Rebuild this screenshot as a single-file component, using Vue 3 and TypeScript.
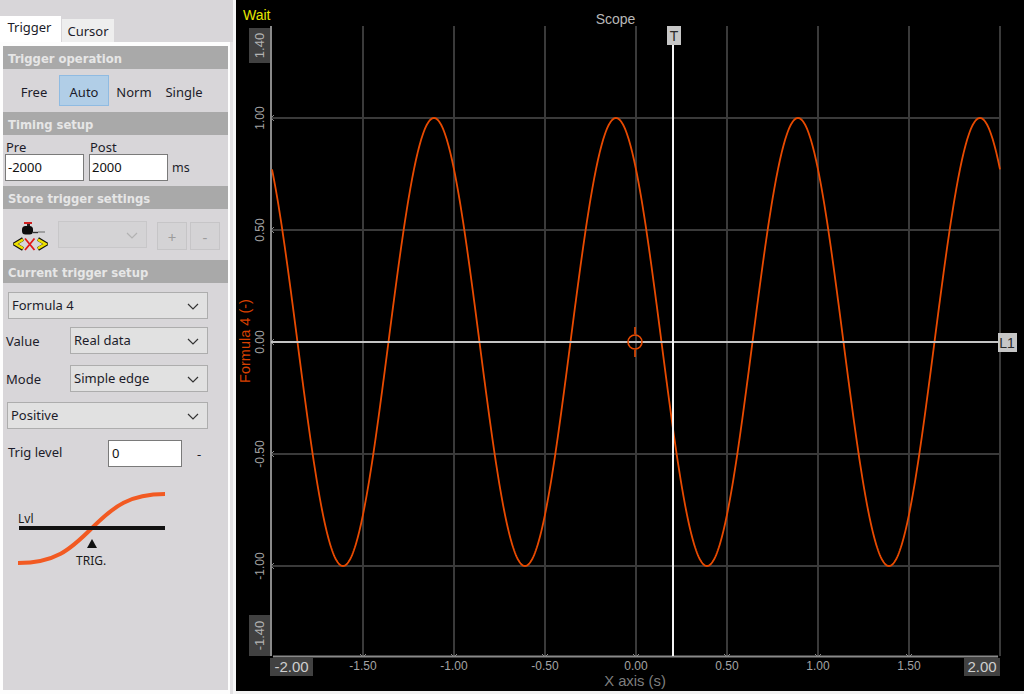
<script setup lang="ts">
const xPx = (v: number) => 636 + v * 182
const yPx = (v: number) => 342 - v * 224

const trace = Array.from({ length: 801 }, (_, i) => {
  const t = -2 + i * 0.005
  return `${xPx(t).toFixed(2)},${yPx(Math.cos(2 * Math.PI * (t + 0.11))).toFixed(2)}`
}).join(' ')

const gridX = [-1.5, -1, -0.5, 0, 0.5, 1, 1.5, 2].map(xPx)
const gridY = [1, 0.5, 0, -0.5, -1].map(yPx)

const xTicks = [
  { label: '-1.50', v: -1.5 },
  { label: '-1.00', v: -1 },
  { label: '-0.50', v: -0.5 },
  { label: '0.00', v: 0 },
  { label: '0.50', v: 0.5 },
  { label: '1.00', v: 1 },
  { label: '1.50', v: 1.5 },
]
const yTicks = [
  { label: '1.00', v: 1 },
  { label: '0.50', v: 0.5 },
  { label: '0.00', v: 0 },
  { label: '-0.50', v: -0.5 },
  { label: '-1.00', v: -1 },
]
const modes = ['Free', 'Auto', 'Norm', 'Single']
</script>

<template>
  <div class="app">
    <aside class="side">
      <div class="tabs">
        <div class="tab active">Trigger</div>
        <div class="tab">Cursor</div>
      </div>
      <div class="sheet">
        <div class="panel">
          <div class="head">Trigger operation</div>
          <div class="modes">
            <div v-for="m in modes" :key="m" class="mode" :class="{ on: m === 'Auto' }">{{ m }}</div>
          </div>

          <div class="head">Timing setup</div>
          <div class="timing">
            <div class="field">
              <span class="cap">Pre</span>
              <div class="input wide">-2000</div>
            </div>
            <div class="field">
              <span class="cap">Post</span>
              <div class="input wide">2000</div>
            </div>
            <span class="unit">ms</span>
          </div>

          <div class="head">Store trigger settings</div>
          <div class="store">
            <svg class="valve" viewBox="0 0 35 30" width="35" height="30">
              <rect x="11" y="1" width="8" height="2" fill="#d02020" />
              <rect x="14" y="3" width="3" height="3" fill="#222" />
              <rect x="9" y="5" width="11" height="8.5" rx="3.5" fill="#0c0c0c" />
              <path d="M20 11.5h5" stroke="#333" stroke-width="1.4" fill="none" />
              <path d="M25 11h7" stroke="#888" stroke-width="1.4" fill="none" />
              <path d="M10 18 1.5 23l8.500 5" fill="none" stroke="#111" stroke-width="3.800" />
              <path d="M10 18.600 2.500 23l7.500 4.400" fill="none" stroke="#eee000" stroke-width="2.600" />
              <path d="M25 18l8.500 5-8.500 5" fill="none" stroke="#111" stroke-width="3.800" />
              <path d="M25 18.600l7.500 4.400-7.500 4.400" fill="none" stroke="#eee000" stroke-width="2.600" />
              <path d="M12 17.500l9.500 11.500M21.500 17.500 12 29" stroke="#e01818" stroke-width="1.800" />
            </svg>
            <div class="select off">
              <svg class="chev" viewBox="0 0 12 7" width="12" height="7"><path d="M1 1l5 5 5-5" fill="none" stroke="#b2b2b2" stroke-width="1.2" /></svg>
            </div>
            <div class="btn plus">+</div>
            <div class="btn">-</div>
          </div>

          <div class="head">Current trigger setup</div>
          <div class="setup">
            <div class="select first">
              <span class="sv">Formula 4</span>
              <svg class="chev" viewBox="0 0 12 7" width="12" height="7"><path d="M1 1l5 5 5-5" fill="none" stroke="#333" stroke-width="1.2" /></svg>
            </div>
            <div class="row r-value">
              <span class="lab">Value</span>
              <div class="select part">
                <span class="sv">Real data</span>
                <svg class="chev" viewBox="0 0 12 7" width="12" height="7"><path d="M1 1l5 5 5-5" fill="none" stroke="#333" stroke-width="1.2" /></svg>
              </div>
            </div>
            <div class="row r-mode">
              <span class="lab">Mode</span>
              <div class="select part">
                <span class="sv">Simple edge</span>
                <svg class="chev" viewBox="0 0 12 7" width="12" height="7"><path d="M1 1l5 5 5-5" fill="none" stroke="#333" stroke-width="1.2" /></svg>
              </div>
            </div>
            <div class="select pos">
              <span class="sv">Positive</span>
              <svg class="chev" viewBox="0 0 12 7" width="12" height="7"><path d="M1 1l5 5 5-5" fill="none" stroke="#333" stroke-width="1.2" /></svg>
            </div>
            <div class="row r-trig">
              <span class="lab trig">Trig level</span>
              <div class="input level">0</div>
              <span class="dash">-</span>
            </div>
            <svg class="diagram" viewBox="0 0 170 90" width="170" height="90">
              <path d="M18 80C55 80 70 67 92 45S130 11 165 11" fill="none" stroke="#f25a22" stroke-width="4" />
              <rect x="19" y="43" width="146" height="4" fill="#111" />
              <path d="M92 56l5 9H87z" fill="#111" />
              <text x="18" y="40" class="dtext">Lvl</text>
              <text x="76" y="82" class="dtext">TRIG.</text>
            </svg>
          </div>
        </div>
      </div>
    </aside>

    <main class="main">
      <svg class="plot" viewBox="236 0 788 691" width="788" height="691">
        <rect x="236" y="0" width="788" height="691" fill="#000" />
        <g stroke="#3a3a3a" stroke-width="2">
          <line v-for="x in gridX" :key="x" :x1="x" :x2="x" y1="26" y2="656" />
          <line v-for="y in gridY" :key="y" x1="271" x2="1000" :y1="y" :y2="y" />
        </g>
        <line x1="271" x2="271" y1="26" y2="656" stroke="#8a8a8a" stroke-width="2" />
        <line x1="273" x2="998" y1="656.5" y2="656.5" stroke="#8a8a8a" stroke-width="2" />
        <g fill="none" stroke="#8a8a8a" stroke-width="1">
          <path v-for="y in gridY" :key="'m' + y" :d="`M274 ${y - 3}l-3 3 3 3`" />
          <path v-for="t in xTicks" :key="'n' + t.v" :d="`M${xPx(t.v) - 3} 654l3 3 3-3`" />
        </g>

        <polyline :points="trace" fill="none" stroke="#e84a00" stroke-width="1.8" />

        <line x1="271" x2="998" y1="342" y2="342" stroke="#c4c4c4" stroke-width="2" />
        <line x1="673" x2="673" y1="44" y2="656" stroke="#f4f4f4" stroke-width="2" />

        <g fill="none" stroke="#e84a00" stroke-width="1.6">
          <circle cx="635" cy="342" r="7" />
          <line x1="635" x2="635" y1="327" y2="334" />
          <line x1="635" x2="635" y1="350" y2="357" />
        </g>

        <rect x="667" y="26" width="14" height="19" fill="#c6c6c6" />
        <text x="674" y="41" text-anchor="middle" class="tick dark">T</text>
        <rect x="998" y="333" width="19" height="19" fill="#c6c6c6" />
        <text x="1007" y="348" text-anchor="middle" class="tick dark">L1</text>

        <text x="243" y="20" class="wait">Wait</text>
        <text x="615.5" y="24" text-anchor="middle" class="title">Scope</text>
        <text x="635" y="686" text-anchor="middle" class="xname">X axis (s)</text>

        <rect x="249" y="28" width="21" height="35" fill="#414141" />
        <rect x="249" y="615" width="21" height="41" fill="#414141" />
        <text transform="translate(250 341) rotate(-90)" text-anchor="middle" class="yname">Formula 4 (-)</text>
        <text transform="translate(264 45.5) rotate(-90)" text-anchor="middle" class="tick">1.40</text>
        <text transform="translate(264 635.5) rotate(-90)" text-anchor="middle" class="tick">-1.40</text>
        <text
          v-for="t in yTicks"
          :key="t.label"
          :transform="`translate(264 ${yPx(t.v)}) rotate(-90)`"
          text-anchor="middle"
          class="tick small"
        >{{ t.label }}</text>

        <rect x="270" y="658" width="43" height="18" fill="#414141" />
        <rect x="964" y="658" width="36" height="18" fill="#414141" />
        <text x="291.5" y="672" text-anchor="middle" class="tick big">-2.00</text>
        <text x="982" y="672" text-anchor="middle" class="tick big">2.00</text>
        <text
          v-for="t in xTicks"
          :key="t.label"
          :x="xPx(t.v)"
          y="670"
          text-anchor="middle"
          class="tick small"
        >{{ t.label }}</text>
      </svg>
      <div class="strip"></div>
    </main>
  </div>
</template>

<style>
html, body { margin: 0; background: #d8d6d9; }
</style>

<style scoped>
.app {
  width: 1024px;
  height: 694px;
  display: flex;
  overflow: hidden;
  background: #d8d6d9;
  font-family: "Noto Sans", "Liberation Sans", sans-serif;
  font-size: 13px;
  color: #1c1c2a;
}
.side {
  width: 236px;
  flex: none;
  box-sizing: border-box;
  border-right: 3px solid #f6f6f6;
  display: flex;
  flex-direction: column;
}
.tabs {
  display: flex;
  align-items: flex-end;
  height: 42px;
  flex: none;
}
.tab {
  width: 52px;
  height: 23px;
  margin-left: 1px;
  line-height: 25px;
  text-align: center;
  background: #eeeeee;
}
.tab.active {
  width: 61px;
  height: 26px;
  margin: 0;
  padding-right: 2px;
  box-sizing: border-box;
  line-height: 22px;
  background: #fff;
}
.sheet {
  flex: 1;
  display: flex;
  background: #e3e2e4;
}
.panel {
  width: 225px;
  border: solid #fdfdfd;
  border-width: 4px 2px 4px 3px;
  background: #d8d6d9;
}
.head {
  height: 23px;
  line-height: 26px;
  padding-left: 5px;
  background: #a9a9a9;
  color: #e6e6e6;
  font-family: "DejaVu Sans", sans-serif;
  font-size: 11.6px;
  font-weight: 700;
}
.modes {
  height: 43px;
  display: flex;
  align-items: center;
  padding-left: 6px;
  box-sizing: border-box;
}
.mode {
  width: 50px;
  height: 31px;
  line-height: 34px;
  text-align: center;
  box-sizing: border-box;
}
.mode.on {
  background: #b1cee7;
  box-shadow: inset 0 0 0 1px #8fbbe2;
}
.timing {
  height: 51px;
  display: flex;
  align-items: flex-end;
  padding: 0 0 5px 2px;
  box-sizing: border-box;
  gap: 5px;
}
.field { display: flex; flex-direction: column; }
.cap { line-height: 12px; height: 13px; padding-left: 1px; }
.input {
  background: #fff;
  border: 1px solid #7a7a7a;
  box-sizing: border-box;
  height: 27px;
  line-height: 24px;
  padding-left: 2px;
  color: #111;
}
.input.wide { width: 79px; }
.unit { line-height: 26px; margin-left: -1px; font-size: 12.5px; }
.store {
  height: 51px;
  display: flex;
  align-items: center;
  padding-left: 10px;
}
.valve { flex: none; margin-right: 10px; margin-top: 2px; }
.select {
  position: relative;
  box-sizing: border-box;
  background: #e1e1e1;
  border: 1px solid #adadad;
  height: 27px;
  line-height: 24px;
}
.select.off {
  width: 89px;
  background: #d4d3d5;
  border-color: #c8c7c9;
  margin-right: 10px;
}
.chev { position: absolute; right: 8px; top: 10px; }
.sv { padding-left: 3px; }
.btn {
  width: 30px;
  height: 28px;
  line-height: 28px;
  box-sizing: border-box;
  border: 1px solid #c6c5c7;
  background: #d4d3d5;
  text-align: center;
  color: #9c9c9c;
  font-size: 15px;
  margin-right: 3px;
  margin-top: 2px;
}
.setup { display: flex; flex-direction: column; }
.first { margin: 9px 20px 0 5px; width: 200px; }
.row { display: flex; align-items: center; }
.r-value { margin-top: 8px; }
.r-mode { margin-top: 11px; }
.lab {
  width: 64px;
  height: 27px;
  padding-left: 3px;
  box-sizing: border-box;
  margin-right: 3px;
  line-height: 29px;
}
.part { width: 138px; }
.pos { margin: 10px 20px 0 4px; width: 201px; }
.r-trig { margin-top: 11px; }
.lab.trig { width: 105px; padding-left: 5px; margin: 0; line-height: 24px; }
.input.level { width: 74px; padding-left: 3px; }
.dash { margin-left: 15px; }
.diagram { display: block; margin: 16px 0 0 -3px; }
.dtext {
  font-family: "Noto Sans", sans-serif;
  font-size: 12px;
  fill: #1a1a1a;
}
.main { flex: 1; display: flex; flex-direction: column; }
.plot { display: block; }
.strip { flex: 1; background: #f2f2f2; }
.tick {
  font-family: "Liberation Sans", sans-serif;
  font-size: 13px;
  fill: #b4b4b4;
}
.tick.small { font-size: 12px; fill: #a4a4a4; }
.tick.big { font-size: 15px; fill: #cfcfcf; }
.tick.dark { fill: #2a2a2a; font-size: 14px; }
.wait { font-family: "Liberation Sans", sans-serif; font-size: 14px; fill: #e6e600; }
.title { font-family: "Liberation Sans", sans-serif; font-size: 14px; fill: #b8b8b8; }
.xname { font-family: "Liberation Sans", sans-serif; font-size: 14.8px; fill: #7e7e7e; }
.yname { font-family: "Liberation Sans", sans-serif; font-size: 14.5px; fill: #d84000; }
</style>
